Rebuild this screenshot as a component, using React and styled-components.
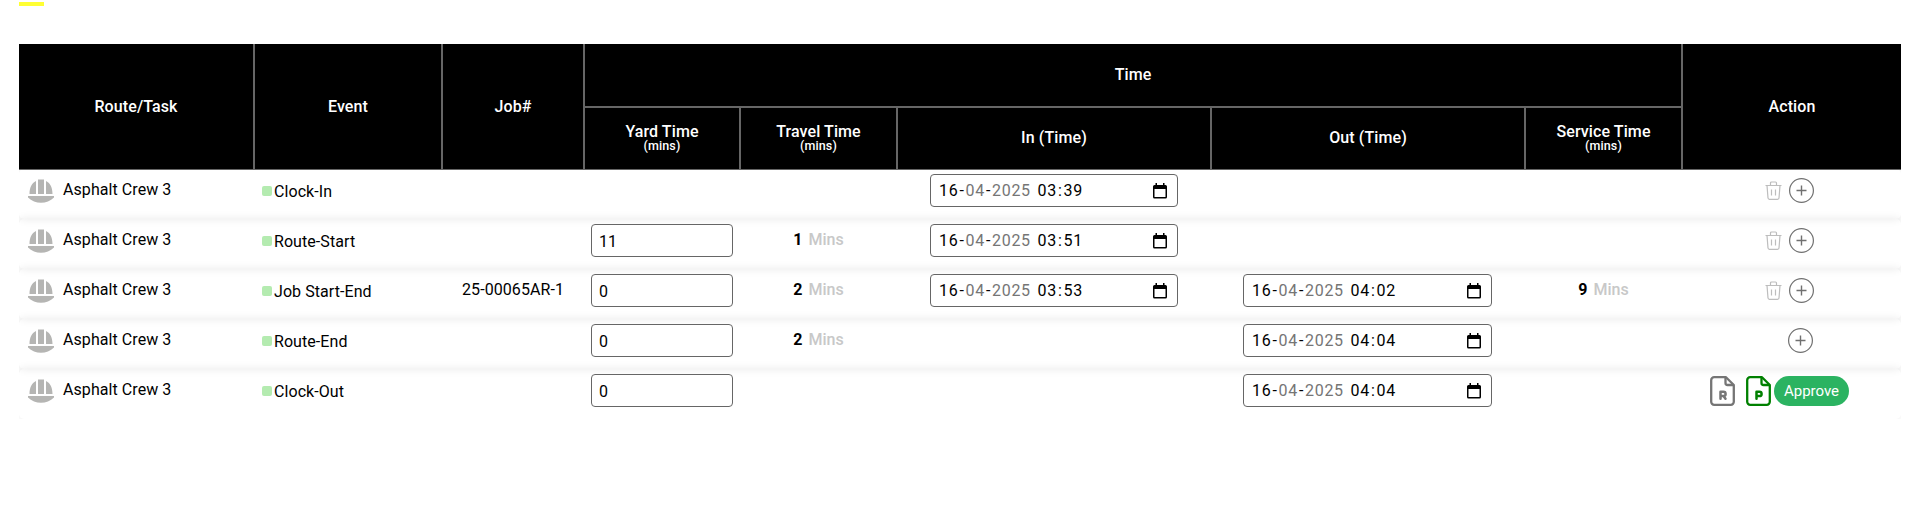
import React from "react";
import styled, { createGlobalStyle } from "styled-components";

const GlobalStyle = createGlobalStyle`
  * { box-sizing: border-box; }
  body {
    margin: 0;
    background: #fff;
    color: #000;
    font-family: Roboto, "Liberation Sans", sans-serif;
    font-size: 16px;
    line-height: 20px;
    letter-spacing: 0.07px;
  }
`;

const COLUMNS = "236px 188px 142px 156px 157px 314px 314px 157px 218px";

const Page = styled.main`
  width: 1918px;
  height: 528px;
  padding: 2px 17px 0 19px;
  overflow: hidden;
`;

const Marker = styled.div`
  width: 25px;
  height: 4px;
  margin-bottom: 38px;
  background: #ffff33;
`;

const HeaderGrid = styled.div`
  position: relative;
  z-index: 1;
  display: grid;
  grid-template-columns: ${COLUMNS};
  grid-template-rows: 64px 61px;
  height: 126px;
  background: #000;
  border-bottom: 1px solid #666;
`;

const HeadCell = styled.div`
  grid-row: ${(p) => p.$row || "1 / 3"};
  grid-column: ${(p) => p.$col};
  display: flex;
  flex-direction: column;
  align-items: center;
  justify-content: center;
  padding-bottom: ${(p) => (p.$row === "2" ? 2 : 0)}px;
  color: #fff;
  font-weight: 500;
  letter-spacing: 0.1px;
  border-right: ${(p) => (p.$last ? "none" : "2px solid #666")};
  border-bottom: ${(p) => (p.$group ? "2px solid #666" : "none")};
`;

const HeadUnit = styled.small`
  margin: -1px 0 3px;
  font-size: 12.5px;
  line-height: 10px;
`;

const Body = styled.div`
  overflow: hidden;
  height: 250px;
  margin-top: -1px;
`;

const Row = styled.div`
  display: grid;
  grid-template-columns: ${COLUMNS};
  align-items: start;
  height: 50px;
  padding-top: 1px;
  border-radius: 5px;
  box-shadow: 0 0 10px rgba(0, 0, 0, 0.09);
`;

const RouteCell = styled.div`
  display: flex;
  gap: 9px;
  padding: 9px 0 0 9px;
  line-height: 22px;
`;

const EventCell = styled.div`
  display: flex;
  align-items: center;
  gap: 2px;
  padding: 12px 0 0 7px;
`;

const Swatch = styled.i`
  width: 10px;
  height: 10px;
  margin-top: -2px;
  border-radius: 2px;
  background: #b4ebb0;
`;

const TextCell = styled.div`
  padding: 10px 2px 0 0;
  text-align: center;
`;

const Minutes = styled.b`
  font-weight: 700;
  margin-right: 6px;
`;

const Unit = styled.span`
  color: #c8c8c8;
  font-weight: 500;
`;

const FieldCell = styled.div`
  display: flex;
  justify-content: center;
  padding: 4px ${(p) => p.$end || 2}px 0 0;
`;

const Field = styled.div`
  display: flex;
  align-items: center;
  width: ${(p) => p.$width}px;
  height: 33px;
  padding: 0 10px 0 ${(p) => p.$inset}px;
  border: 1px solid #666;
  border-radius: 4px;
  background: #fff;
`;

const NumberField = styled(Field)`
  padding-top: 2px;
`;

const DateText = styled.span`
  flex: 1;
  letter-spacing: 0.7px;
  white-space: pre;
`;

const DatePart = styled.span`
  padding: 0 1px;
  color: ${(p) => (p.$faded ? "#757575" : "inherit")};
`;

const Actions = styled.div`
  display: flex;
  align-items: center;
  padding: ${(p) => p.$top}px 0 0 ${(p) => p.$left}px;
`;

const TrashSlot = styled.span`
  display: flex;
  margin-right: 7px;
`;

const DocSlot = styled.span`
  display: flex;
  margin-right: ${(p) => p.$gap}px;
`;

const Approve = styled.button`
  width: 75px;
  height: 30px;
  padding: 0;
  border: 0;
  border-radius: 15px;
  background: #2bb361;
  color: #fff;
  font: 400 15px/30px Roboto, sans-serif;
`;

const HelmetIcon = () => (
  <svg width="26" height="24" viewBox="0 0 26 24" fill="#b5b5b3">
    <path d="M10 0.5h6v14.5h-6zM8 2v13H1.5C1.5 9 3.5 4 8 2zM18 2v13h6.5C24.5 9 22.5 4 18 2zM0 17h26v1.5C19 25.5 7 25.5 0 18.5z" />
  </svg>
);

const CalendarIcon = () => (
  <svg width="14" height="16" viewBox="0 0 14 16">
    <path d="M2.5 0h1.5v2h6V0h1.5v2H12.5a1.5 1.5 0 0 1 1.5 1.5V14a1.5 1.5 0 0 1-1.5 1.5h-11A1.5 1.5 0 0 1 0 14V3.5A1.5 1.5 0 0 1 1.5 2h1zM1.5 6v8h11V6z" fillRule="evenodd" />
  </svg>
);

const TrashIcon = () => (
  <svg width="17" height="19" viewBox="0 0 17 19" fill="none" stroke="#bdbdbd" strokeWidth="1.2">
    <path d="M0.5 4.5h16M5.5 4.5V2a1 1 0 0 1 1-1h4a1 1 0 0 1 1 1v2.5M2 4.5l1 12.5a1.5 1.5 0 0 0 1.5 1.3h8a1.5 1.5 0 0 0 1.5-1.3l1-12.5M6.5 8.5v6M10.5 8.5v6" />
  </svg>
);

const PlusIcon = () => (
  <svg width="25" height="25" viewBox="0 0 25 25" fill="none" stroke="#707070">
    <circle cx="12.5" cy="12.5" r="11.9" strokeWidth="1.2" />
    <path d="M12.5 7.5v10M7.5 12.5h10" strokeWidth="1.4" />
  </svg>
);

const DocIcon = ({ color, children }) => (
  <svg width="25" height="30" viewBox="0 0 25 30" fill="none" stroke={color} strokeWidth="2.3" strokeLinejoin="round">
    <path d="M16 1.2H4.2a3 3 0 0 0-3 3v21.6a3 3 0 0 0 3 3h16.6a3 3 0 0 0 3-3V9z" />
    <path d="M15.5 1.5V7a2 2 0 0 0 2 2H23.5" />
    <g strokeLinecap="round" strokeWidth="2.5">{children}</g>
  </svg>
);

const DateField = ({ width, time }) => {
  const [hour, minute] = time.split(":");
  return (
    <Field $width={width} $inset={7}>
      <DateText>
        <DatePart>16</DatePart>-<DatePart $faded>04</DatePart>-<DatePart $faded>2025</DatePart>{" "}
        <DatePart>{hour}</DatePart>:<DatePart>{minute}</DatePart>
      </DateText>
      <CalendarIcon />
    </Field>
  );
};

const rows = [
  { event: "Clock-In", in: "03:39", actions: "edit" },
  { event: "Route-Start", yard: "11", travel: "1", in: "03:51", actions: "edit" },
  { event: "Job Start-End", job: "25-00065AR-1", yard: "0", travel: "2", in: "03:53", out: "04:02", service: "9", actions: "edit" },
  { event: "Route-End", yard: "0", travel: "2", out: "04:04", actions: "add" },
  { event: "Clock-Out", yard: "0", out: "04:04", actions: "approve" },
];

const MinutesCell = ({ value }) => (
  <TextCell>
    {value && (
      <>
        <Minutes>{value}</Minutes>
        <Unit>Mins</Unit>
      </>
    )}
  </TextCell>
);

const RowActions = ({ kind }) => {
  if (kind === "approve") {
    return (
      <Actions $top={6} $left={27}>
        <DocSlot $gap={11}>
          <DocIcon color="#757575">
            <path d="M10.5 22.8v-7h3a2 2 0 0 1 0 4.2h-3M13.5 20l2 2.8" />
          </DocIcon>
        </DocSlot>
        <DocSlot $gap={3}>
          <DocIcon color="#008000">
            <path d="M10.5 22.8v-7h3a2 2 0 0 1 0 4.2h-3" />
          </DocIcon>
        </DocSlot>
        <Approve>Approve</Approve>
      </Actions>
    );
  }
  return (
    <Actions $top={8} $left={kind === "edit" ? 82 : 105}>
      {kind === "edit" && (
        <TrashSlot>
          <TrashIcon />
        </TrashSlot>
      )}
      <PlusIcon />
    </Actions>
  );
};

export default function App() {
  return (
    <Page>
      <GlobalStyle />
      <Marker />
      <HeaderGrid>
        <HeadCell $col="1">Route/Task</HeadCell>
        <HeadCell $col="2">Event</HeadCell>
        <HeadCell $col="3">Job#</HeadCell>
        <HeadCell $col="4 / 9" $row="1" $group>Time</HeadCell>
        <HeadCell $col="4" $row="2">Yard Time<HeadUnit>(mins)</HeadUnit></HeadCell>
        <HeadCell $col="5" $row="2">Travel Time<HeadUnit>(mins)</HeadUnit></HeadCell>
        <HeadCell $col="6" $row="2">In (Time)</HeadCell>
        <HeadCell $col="7" $row="2">Out (Time)</HeadCell>
        <HeadCell $col="8" $row="2">Service Time<HeadUnit>(mins)</HeadUnit></HeadCell>
        <HeadCell $col="9" $last>Action</HeadCell>
      </HeaderGrid>
      <Body>
        {rows.map((row) => (
          <Row key={row.event}>
            <RouteCell><HelmetIcon />Asphalt Crew 3</RouteCell>
            <EventCell><Swatch />{row.event}</EventCell>
            <TextCell>{row.job}</TextCell>
            <FieldCell>{row.yard && <NumberField $width={142} $inset={7}>{row.yard}</NumberField>}</FieldCell>
            <MinutesCell value={row.travel} />
            <FieldCell>{row.in && <DateField width={248} time={row.in} />}</FieldCell>
            <FieldCell $end={3}>{row.out && <DateField width={249} time={row.out} />}</FieldCell>
            <MinutesCell value={row.service} />
            <RowActions kind={row.actions} />
          </Row>
        ))}
      </Body>
    </Page>
  );
}
